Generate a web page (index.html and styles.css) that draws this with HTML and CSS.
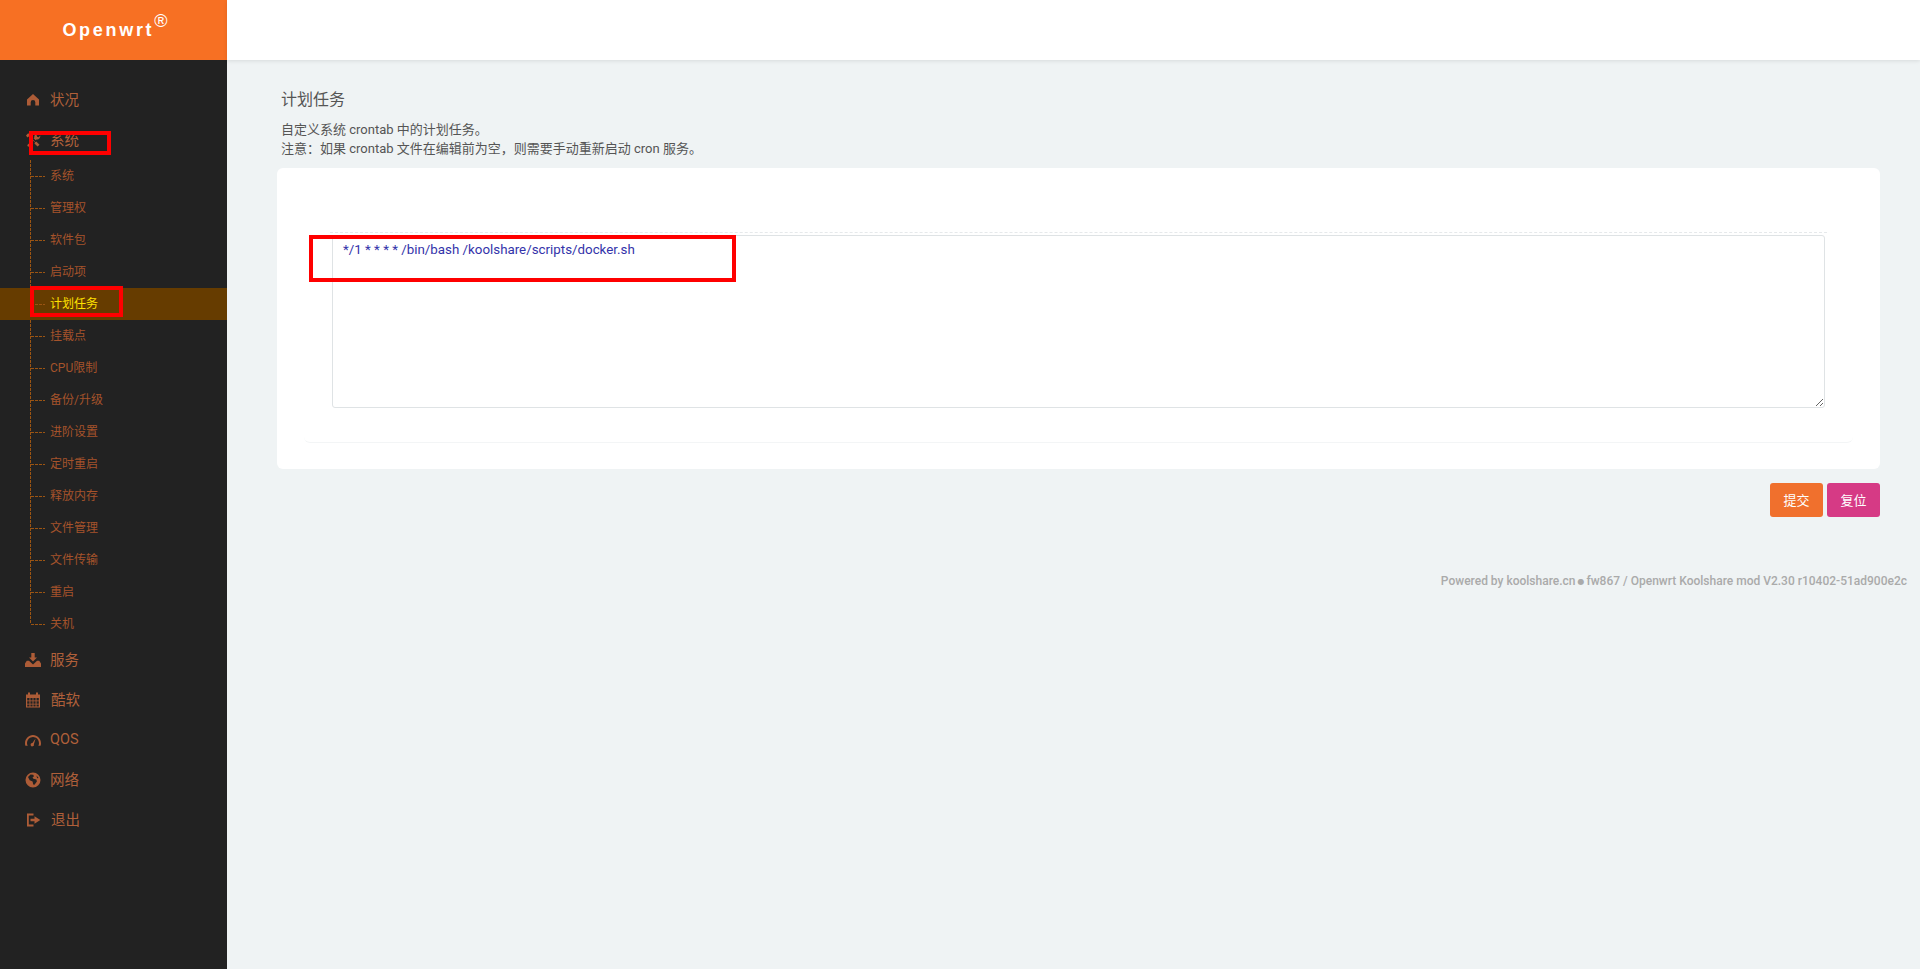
FILE: index.html
```html
<!DOCTYPE html>
<html lang="zh-CN">
<head>
<meta charset="utf-8">
<title>计划任务</title>
<link rel="stylesheet" href="styles.css">
</head>
<body>
<div class="app">
  <aside class="sidebar">
    <div class="brand"><span class="brand-name">Openwrt</span><sup class="brand-mark">®</sup></div>
    <nav class="nav">
      <a class="nav-main"><svg class="ico" viewBox="0 0 16 16"><path d="M8 2l6 5.500V13.500H10.300V10.300a2.300 2.300 0 0 0-4.600 0v3.200H2V7.500z"/></svg><span class="label">状况</span></a>
      <a class="nav-main"><svg class="ico" viewBox="0 0 16 16"><path d="M1 3.500 3.200 1.200 4.800 2.600 4 3.600 10.400 10.200l.9-.7 3.200 3.200-1.900 1.900-3.200-3.200.7-.9L3.500 4.600l-1 .8zM9.300 5.600c-.4-2.400 1.500-4.300 4-4l-1.700 1.700.5 1.500 1.500.5 1.700-1.700c.3 2.500-1.500 4.300-3.900 3.900l-.7.7-2.100-2zM6.300 9.200l1.500 1.500-3.900 3.900c-.9.300-1.700-.5-1.500-1.500z"/></svg><span class="label">系统</span></a>
      <ul class="sub">
        <li><a>系统</a></li>
        <li><a>管理权</a></li>
        <li><a>软件包</a></li>
        <li><a>启动项</a></li>
        <li class="active"><a>计划任务</a></li>
        <li><a>挂载点</a></li>
        <li><a>CPU限制</a></li>
        <li><a>备份/升级</a></li>
        <li><a>进阶设置</a></li>
        <li><a>定时重启</a></li>
        <li><a>释放内存</a></li>
        <li><a>文件管理</a></li>
        <li><a>文件传输</a></li>
        <li><a>重启</a></li>
        <li><a>关机</a></li>
      </ul>
      <a class="nav-main"><svg class="ico" viewBox="0 0 16 16"><path d="M6.300 1h3.400v4.500H12L8 9.500 4 5.500h2.300zM0 11.500l1.800-2.700H4l4 3.700 4-3.700h2.200L16 11.500V15H0z"/></svg><span class="label">服务</span></a>
      <a class="nav-main nav-wide"><svg class="ico" viewBox="0 0 16 16"><path fill-rule="evenodd" d="M3 .5h2v2h6v-2h2v2h2V15.500H1V2.500h2zM2.200 6v2.500h2.300V6zm3.200 0v2.500h2.200V6zm3 0v2.500h2.200V6zm3.100 0v2.500h2.300V6zM2.200 9.300v2.500h2.300V9.300zm3.200 0v2.500h2.200V9.300zm3 0v2.500h2.200V9.300zm3.100 0v2.500h2.300V9.300zM2.200 12.600v2h2.300v-2zm3.200 0v2h2.200v-2zm3 0v2h2.200v-2zm3.100 0v2h2.300v-2z"/></svg><span class="label">酷软</span></a>
      <a class="nav-main nav-latin"><svg class="ico" viewBox="0 0 16 16"><path d="M8 3C3.600 3 0 6.700 0 11.200c0 .9.100 1.800.4 2.600h2.300A6 6 0 0 1 2 11.200C2 7.800 4.700 5 8 5s6 2.800 6 6.200c0 .9-.2 1.800-.6 2.600h2.200c.3-.8.400-1.700.4-2.600C16 6.700 12.400 3 8 3zm2.600 3.600L7.400 11a1.700 1.700 0 1 0 1.500 1.200z"/></svg><span class="label">QOS</span></a>
      <a class="nav-main"><svg class="ico" viewBox="0 0 16 16"><path fill-rule="evenodd" d="M8 .5a7.500 7.500 0 1 0 0 15A7.500 7.500 0 0 0 8 .5zM3 5l2.500-2.500 2.700.2.800 1.500-1.500 1.300.9 1.200 3 .8.500 2-2.400 3.200-1.300-.2-.6-3L4.700 8.200zM11.500 3.500 13.600 6l-1.500.3z"/></svg><span class="label">网络</span></a>
      <a class="nav-main nav-wide"><svg class="ico" viewBox="0 0 16 16"><path d="M2 1.500h6.500v2H3.800v9h4.700v2H2zM9.500 4.300 15.300 8l-5.800 3.700V9.200H5.500V6.800h4z"/></svg><span class="label">退出</span></a>
    </nav>
  </aside>
  <div class="page">
    <header class="topbar"></header>
    <main class="content">
      <div class="intro">
        <h2 class="title">计划任务</h2>
        <p class="desc">自定义系统 crontab 中的计划任务。<br>注意：如果 crontab 文件在编辑前为空，则需要手动重新启动 cron 服务。</p>
      </div>
      <section class="card">
        <div class="section">
          <div class="field">
            <textarea class="editor" spellcheck="false">*/1 * * * * /bin/bash /koolshare/scripts/docker.sh</textarea>
          </div>
        </div>
      </section>
      <div class="actions">
        <button class="btn btn-save">提交</button>
        <button class="btn btn-reset">复位</button>
      </div>
      <footer class="foot">Powered by koolshare.cn <span class="dot">●</span> fw867 / Openwrt Koolshare mod V2.30 r10402-51ad900e2c</footer>
    </main>
  </div>
</div>
<div class="mark mark-nav"></div>
<div class="mark mark-item"></div>
<div class="mark mark-cron"></div>
</body>
</html>
```
FILE: styles.css
```css
* { box-sizing: border-box; }
html, body { margin: 0; height: 100%; }
body {
  font-family: Roboto, "Noto Sans CJK SC", sans-serif;
  font-size: 12px;
  background: #eff3f4;
  overflow: hidden;
}
.app { display: flex; height: 969px; }

.sidebar { width: 227px; flex: none; background: #222; }
.brand {
  height: 60px;
  background: #f77023;
  color: #fff;
  display: flex;
  justify-content: center;
  align-items: center;
  padding-left: 3px;
}
.brand-name {
  font-family: "Liberation Sans", sans-serif;
  font-weight: 700;
  font-size: 18px;
  letter-spacing: 2.7px;
}
.brand-mark {
  font-family: "Liberation Sans", sans-serif;
  font-size: 18px;
  line-height: 1;
  margin: -18px 0 0 0;
  font-weight: 400;
}
.nav { padding-top: 20px; }
.nav-main {
  display: flex;
  align-items: center;
  height: 40px;
  padding-left: 25px;
  color: #b0603a;
  font-size: 14.5px;
}
.label { margin-top: -3px; }
.nav-latin .label { margin-top: -1px; }
.ico { width: 16px; height: 16px; margin-right: 9px; fill: #ad5c37; flex: none; }
.nav-wide .ico { margin-right: 10px; }

.sub { list-style: none; margin: 0; padding: 0; position: relative; }
.sub::before {
  content: "";
  position: absolute;
  left: 30px;
  top: 0;
  bottom: 16px;
  width: 1px;
  background: repeating-linear-gradient(180deg, #9b5412 0 3px, transparent 3px 4px);
}
.sub li { height: 32px; position: relative; display: flex; align-items: center; padding-left: 50px; }
.sub li::before {
  content: "";
  position: absolute;
  left: 31px;
  top: 16px;
  width: 14px;
  height: 1px;
  background: repeating-linear-gradient(90deg, #9b5412 0 3px, transparent 3px 4px);
}
.sub a { color: #a5532b; font-size: 12px; margin-top: -3px; }
.sub .active { background: #663c00; }
.sub .active a { color: #ffe000; }

.page { flex: 1; min-width: 0; display: flex; flex-direction: column; }
.topbar { height: 60px; background: #fff; box-shadow: 0 1px 4px rgba(0, 0, 0, .1); flex: none; }
.content { padding: 0 40px 0 50px; flex: 1; }

.intro { height: 108px; padding: 30px 0 0 4px; color: #555; }
.title { margin: 0 0 10px; font-size: 16px; font-weight: 400; line-height: 20px; color: #555; }
.desc { margin: 0; font-size: 13px; line-height: 19px; color: #555; }

.card { background: #fff; border-radius: 6px; padding: 0 27px 26px; height: 301px; }
.section { padding-top: 64px; height: 275px; border-bottom: 1px solid #f3f5f6; border-radius: 0 0 6px 6px; }
.field { margin: 0 26px; border-top: 1px dashed #e6e9eb; padding: 2px 2px 0; }
.editor {
  display: block;
  width: 100%;
  height: 173px;
  border: 1px solid #dfe3e5;
  border-radius: 3px;
  padding: 6px 10px;
  font: 13.33px/16px Roboto, "Noto Sans CJK SC", sans-serif;
  color: #3333aa;
  background: #fff;
  outline: none;
}

.actions { display: flex; justify-content: flex-end; gap: 4px; margin-top: 14px; }
.btn {
  width: 53px;
  height: 34px;
  border: 0;
  border-radius: 3px;
  color: #fff;
  font-family: inherit;
  font-size: 13px;
  padding: 0 0 2px;
}
.btn-save { background: #f0702d; }
.btn-reset { background: #d63a85; }

.foot {
  margin: 56px -27px 0 0;
  text-align: right;
  font-size: 12px;
  line-height: 16px;
  color: #aaa;
  font-weight: 500;
}
.dot { font-family: "DejaVu Sans", sans-serif; font-size: 8px; vertical-align: 1px; margin: 0 -1px; }

.mark { position: absolute; border: 4px solid #f00; }
.mark-nav { left: 29px; top: 131px; width: 82px; height: 24px; }
.mark-item { left: 30px; top: 286px; width: 93px; height: 31px; }
.mark-cron { left: 309px; top: 235px; width: 427px; height: 47px; }
```
